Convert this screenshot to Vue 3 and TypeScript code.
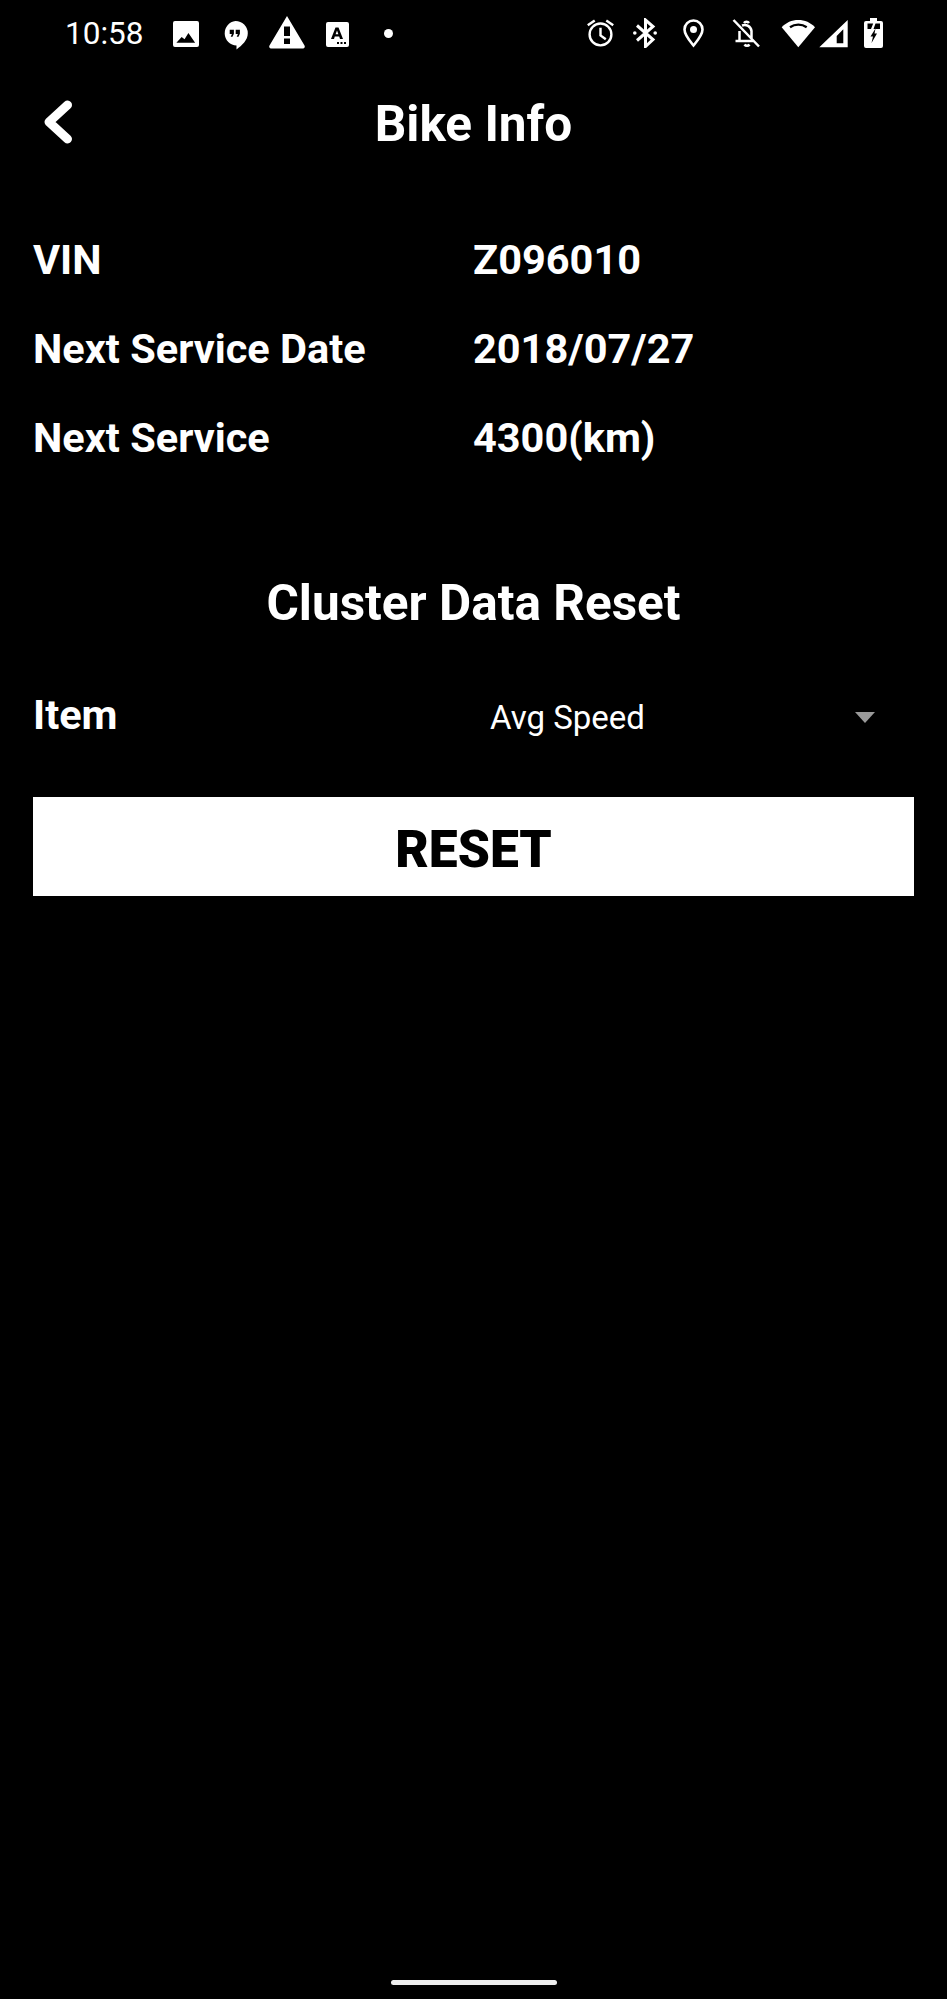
<script setup lang="ts">
const infoRows = [
  { label: "VIN", value: "Z096010" },
  { label: "Next Service Date", value: "2018/07/27" },
  { label: "Next Service", value: "4300(km)" },
];
</script>

<template>
  <main class="screen">
    <header class="status-bar">
      <div class="status-left">
        <span class="clock">10:58</span>
        <svg class="ic photo" viewBox="0 0 27 27">
          <path fill="#fff" fill-rule="evenodd" d="M2 0h23a2 2 0 0 1 2 2v23a2 2 0 0 1-2 2H2a2 2 0 0 1-2-2V2a2 2 0 0 1 2-2zM3.500 22.500l5.500-6 3 2.500 4-6.500 7 10z" />
        </svg>
        <svg class="ic hangouts" viewBox="0 0 25 29">
          <path fill="#fff" fill-rule="evenodd" d="M12.500 0a12.300 12.300 0 0 1 12.300 12.300c0 7-5.800 12-11.300 16.200v-4a12.300 12.300 0 0 1-1-24.500zM6.700 8.700v4.200h2.200L7.700 15.700h1.800l1.400-3V8.700zM12.700 8.700v4.200h2.200l-1.200 2.800h1.800l1.400-3V8.700z" />
        </svg>
        <svg class="ic warn" viewBox="0 0 36 33">
          <path fill="#fff" fill-rule="evenodd" d="M18 0l17.500 29.500a2 2 0 0 1-1.500 3H2a2 2 0 0 1-1.500-3zM15 10.500V20h6v-9.500zM15 22.500v5.500h6v-5.500z" />
        </svg>
        <svg class="ic badge" viewBox="0 0 23 25">
          <path fill="#fff" fill-rule="evenodd" d="M2 0h19a2 2 0 0 1 2 2v21a2 2 0 0 1-2 2H2a2 2 0 0 1-2-2V2a2 2 0 0 1 2-2zM9.500 5.500L5 17h3l.8-2.400h4.400L14 17h3L12.500 5.500zM9.600 12.200L11 8.500l1.400 3.700zM11 20h2v2h-2zM14.500 20h2v2h-2zM18 20h2v2h-2z" />
        </svg>
        <span class="dot"></span>
      </div>
      <div class="status-right">
        <svg class="ic alarm" viewBox="0 0 28 30" fill="none" stroke="#fff" stroke-width="2.500">
          <circle cx="14" cy="16.500" r="11.300" />
          <path d="M14 9.500v8l5.500 4M.8 7l7.200-5M27.200 7L20 2" />
        </svg>
        <svg class="ic bt" viewBox="0 0 24 30" fill="none" stroke="#fff" stroke-width="3">
          <path d="M4 7.500l16 14-7.500 7V2L20 8.500 4 22.500" />
          <circle cx="1.800" cy="15" r="1.800" fill="#fff" stroke="none" />
          <circle cx="22.200" cy="15" r="1.800" fill="#fff" stroke="none" />
        </svg>
        <svg class="ic loc" viewBox="0 0 21 29" fill="none" stroke="#fff" stroke-width="2.600">
          <path d="M10.500 26.500C6 21 1.500 16 1.500 10.500a9 9 0 0 1 18 0c0 5.500-4.500 10.500-9 16z" />
          <circle cx="10.500" cy="10.500" r="3.500" fill="#fff" stroke="none" />
        </svg>
        <svg class="ic bell" viewBox="0 0 28 30" fill="none" stroke="#fff" stroke-width="2.500">
          <path d="M1.500 2L27 28.500M7.500 13V23M3.500 23H21M10 7.500A7 7 0 0 1 19.500 13v7.500" />
          <path d="M12 5a3 3 0 0 1 5 0M12.500 26.500a3 3 0 0 0 5 0" />
        </svg>
        <svg class="ic wifi" viewBox="0 0 36 29">
          <path fill="#fff" d="M17.300 1c6.500 0 12.300 2.500 16.700 7.300L17.300 28.300 .7 8.300C5 3.500 10.800 1 17.300 1z" />
          <path fill="none" stroke="#000" stroke-width="2.400" d="M9 8.200c5-3.400 11.700-3.400 16.700 0" />
        </svg>
        <svg class="ic signal" viewBox="0 0 29 29">
          <path fill="#fff" fill-rule="evenodd" d="M.3 28.300L28.700 1v27.300zM17.700 24.300h6.600v-14l-6.600 6.700z" />
        </svg>
        <svg class="ic battery" viewBox="0 0 19 30">
          <path fill="#fff" fill-rule="evenodd" d="M6 0h7v3h4a2 2 0 0 1 2 2v23a2 2 0 0 1-2 2H2a2 2 0 0 1-2-2V5a2 2 0 0 1 2-2h4zM3.500 5.500V11h3.500l2.200-5.500zM11.500 5.500L9.500 11h6.500V5.500zM11.500 10.500l-5 8h2.500l-1.500 6.500 5.500-9.500H10.500z" />
        </svg>
      </div>
    </header>

    <nav class="title-bar">
      <svg class="back" viewBox="0 0 28 44" width="28" height="44" fill="none" stroke="#fff" stroke-width="9" stroke-linecap="round" stroke-linejoin="round">
        <path d="M23.500 5L5 22l18.500 17" />
      </svg>
      <h1 class="title">Bike Info</h1>
    </nav>

    <section class="info">
      <div v-for="row in infoRows" :key="row.label" class="info-row">
        <span class="label">{{ row.label }}</span>
        <span class="label">{{ row.value }}</span>
      </div>
    </section>

    <h2 class="section-title">Cluster Data Reset</h2>

    <div class="item-row">
      <span class="label">Item</span>
      <div class="select">
        <span class="select-text">Avg Speed</span>
        <i class="arrow"></i>
      </div>
    </div>

    <button class="reset">RESET</button>

    <div class="spacer"></div>
    <div class="home-bar"></div>
  </main>
</template>

<style scoped>
* {
  margin: 0;
  padding: 0;
  box-sizing: border-box;
}

.screen {
  width: 947px;
  height: 1999px;
  background: #000;
  color: #fff;
  font-family: Roboto, "Liberation Sans", sans-serif;
  display: flex;
  flex-direction: column;
  overflow: hidden;
}

.status-bar {
  height: 66px;
  padding: 0 64px 0 65px;
  display: flex;
  justify-content: space-between;
  align-items: center;
}

.status-left,
.status-right {
  display: flex;
  align-items: center;
}

.clock {
  font-size: 31.500px;
  margin-right: 30px;
}

.photo {
  width: 26px;
  height: 26px;
  margin-top: 1px;
}

.hangouts {
  width: 25px;
  height: 29px;
  margin: 4px 0 0 24px;
}

.warn {
  width: 36px;
  height: 33px;
  margin: 0 0 2px 21px;
}

.badge {
  width: 23px;
  height: 25px;
  margin: 2px 0 0 21px;
}

.dot {
  width: 9px;
  height: 9px;
  border-radius: 50%;
  background: #fff;
  margin-left: 35px;
}

.alarm {
  width: 27px;
  height: 30px;
}

.bt {
  width: 24px;
  height: 30px;
  margin-left: 19px;
}

.loc {
  width: 21px;
  height: 29px;
  margin-left: 26px;
}

.bell {
  width: 28px;
  height: 30px;
  margin-left: 28px;
}

.wifi {
  width: 36px;
  height: 29px;
  margin-left: 21px;
}

.signal {
  width: 29px;
  height: 29px;
  margin-left: 2px;
}

.battery {
  width: 19px;
  height: 30px;
  margin-left: 16px;
}

.title-bar {
  position: relative;
  height: 114px;
  padding-top: 1px;
  display: flex;
  align-items: center;
  justify-content: center;
}

.back {
  position: absolute;
  left: 44px;
  top: 34px;
}

.title {
  font-size: 49.500px;
  font-weight: 700;
}

.info {
  padding: 35px 33px 0;
  display: flex;
  flex-direction: column;
}

.info-row {
  height: 89px;
  display: grid;
  grid-template-columns: 440px 1fr;
  align-items: center;
}

.label {
  font-size: 41.500px;
  font-weight: 700;
}

.section-title {
  margin-top: 92px;
  text-align: center;
  font-size: 49.500px;
  font-weight: 700;
}

.item-row {
  margin-top: 57.500px;
  padding: 0 33px;
  display: grid;
  grid-template-columns: 440px 1fr;
  align-items: center;
}

.select {
  display: flex;
  align-items: center;
  justify-content: space-between;
  padding: 6px 39px 0 17px;
}

.select-text {
  font-size: 33px;
}

.arrow {
  width: 0;
  height: 0;
  border-left: 10px solid transparent;
  border-right: 10px solid transparent;
  border-top: 11px solid #999;
}

.reset {
  margin: 58.500px 33px 0;
  height: 99px;
  padding-top: 5px;
  border: none;
  background: #fff;
  color: #000;
  font-family: inherit;
  font-size: 51.500px;
  font-weight: 900;
}

.spacer {
  flex: 1;
}

.home-bar {
  align-self: center;
  width: 166px;
  height: 5px;
  border-radius: 3px;
  background: #eee;
  margin-bottom: 14px;
}
</style>
